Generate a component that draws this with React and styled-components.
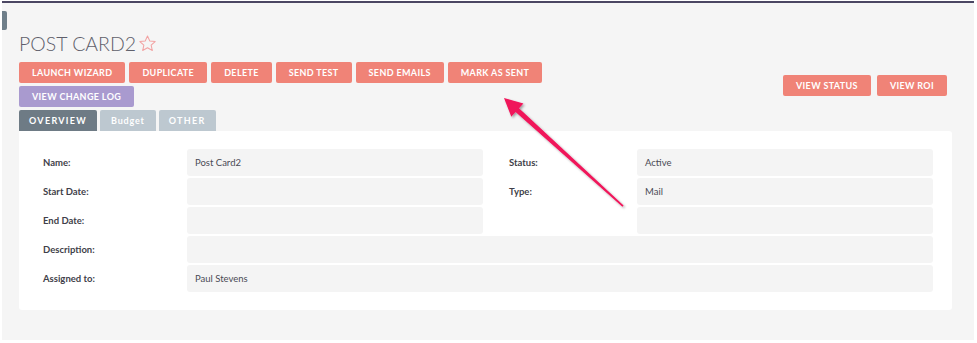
import React from "react";
import styled, { createGlobalStyle } from "styled-components";

const GlobalStyle = createGlobalStyle`
  html, body { margin: 0; padding: 0; background: #ffffff; }
  body { font-family: Lato, "Open Sans", sans-serif; }
`;

// gray page area with the dark top rule
const Frame = styled.div`
  position: relative;
  box-sizing: border-box;
  margin: 1px 0 0 2px;
  width: 972px;
  height: 339px;
  background: #f5f5f5;
  border-top: 2px solid #4b4763;
  padding: 0 20px 0 17px;
`;

const SideHandle = styled.div`
  position: absolute;
  left: 0;
  top: 8px;
  width: 5px;
  height: 19px;
  background: #6f7f8a;
  border-radius: 0 2px 2px 0;
`;

const Title = styled.h1`
  margin: 0;
  padding-top: 29px;
  display: flex;
  align-items: center;
  gap: 2px;
  font-family: Lato, sans-serif;
  font-weight: 300;
  font-size: 19.5px;
  line-height: 24px;
  letter-spacing: 0;
  color: #5f5f6b;
`;

const Star = styled.svg`
  width: 19px;
  height: 19px;
  margin-top: -2px;
`;

const Header = styled.div`
  display: flex;
  justify-content: space-between;
  align-items: center;
  margin-top: 6px;
`;

const ActionRows = styled.div`
  display: flex;
  flex-direction: column;
  gap: 3px;
`;

const Row = styled.div`
  display: flex;
  gap: 4px;
`;

const Button = styled.button`
  box-sizing: border-box;
  height: 21px;
  padding: 0 13px;
  border: none;
  border-radius: 2px;
  background: ${(p) => (p.$variant === "purple" ? "#a99acf" : "#f08377")};
  color: #ffffff;
  font-family: Lato, sans-serif;
  font-weight: 700;
  font-size: 9px;
  letter-spacing: 0.35px;
  line-height: 21px;
  white-space: nowrap;
  cursor: pointer;
`;

const RightActions = styled(Row)`
  gap: 6px;
  margin-right: 7px;
  margin-top: 1px;
`;

const Tabs = styled.div`
  display: flex;
  gap: 3px;
  margin-top: 3px;
`;

const Tab = styled.div`
  box-sizing: border-box;
  height: 21px;
  padding: 0 ${(p) => p.$pad || 10}px;
  border-radius: 2px 2px 0 0;
  background: ${(p) => (p.$active ? "#6e7b85" : "#bdc8d0")};
  color: #ffffff;
  font-family: Lato, sans-serif;
  font-weight: 700;
  font-size: 9px;
  letter-spacing: ${(p) => (p.$caps ? "1.3px" : "0.8px")};
  line-height: 22px;
`;

const Panel = styled.div`
  box-sizing: border-box;
  width: 933px;
  background: #ffffff;
  border-radius: 0 3px 3px 3px;
  padding: 18px 19px 18px 24px;
`;

const Grid = styled.div`
  display: grid;
  grid-template-columns: 144px 296px 26px 128px 296px;
  grid-auto-rows: 27px;
  row-gap: 2px;
`;

const Label = styled.div`
  display: flex;
  align-items: center;
  padding-bottom: 1px;
  font-family: Lato, sans-serif;
  font-weight: 700;
  font-size: 9.5px;
  color: #3f3f4a;
  grid-column: ${(p) => p.$col || "auto"};
`;

const Value = styled.div`
  display: flex;
  align-items: center;
  padding: 0 8px;
  border-radius: 3px;
  background: #f4f4f4;
  font-family: Lato, sans-serif;
  font-size: 9.5px;
  color: #4a4a55;
  grid-column: ${(p) => p.$col || "auto"};
`;

const Spacer = styled.div`
  grid-column: ${(p) => p.$col};
`;

const Annotation = styled.svg`
  position: absolute;
  left: -2px;
  top: -3px;
  width: 977px;
  height: 343px;
  pointer-events: none;
  overflow: visible;
`;

export default function App() {
  return (
    <>
      <GlobalStyle />
      <Frame>
        <SideHandle />
        <Title>
          POST CARD2
          <Star viewBox="0 0 24 24">
            <path
              d="M12 2.5l2.9 6.3 6.8.7-5.1 4.6 1.5 6.8L12 17.4l-6.1 3.5 1.5-6.8-5.1-4.6 6.8-.7z"
              fill="none"
              stroke="#f2a3a3"
              strokeWidth="1.3"
              strokeLinejoin="round"
            />
          </Star>
        </Title>

        <Header>
          <ActionRows>
            <Row>
              <Button>LAUNCH WIZARD</Button>
              <Button>DUPLICATE</Button>
              <Button>DELETE</Button>
              <Button>SEND TEST</Button>
              <Button>SEND EMAILS</Button>
              <Button>MARK AS SENT</Button>
            </Row>
            <Row>
              <Button $variant="purple">VIEW CHANGE LOG</Button>
            </Row>
          </ActionRows>
          <RightActions>
            <Button>VIEW STATUS</Button>
            <Button>VIEW ROI</Button>
          </RightActions>
        </Header>

        <Tabs>
          <Tab $active $caps>OVERVIEW</Tab>
          <Tab $pad={11}>Budget</Tab>
          <Tab $caps>OTHER</Tab>
        </Tabs>

        <Panel>
          <Grid>
            <Label>Name:</Label>
            <Value>Post Card2</Value>
            <Label $col="4">Status:</Label>
            <Value>Active</Value>

            <Label>Start Date:</Label>
            <Value />
            <Label $col="4">Type:</Label>
            <Value>Mail</Value>

            <Label>End Date:</Label>
            <Value />
            <Spacer $col="3 / 5" />
            <Value />

            <Label>Description:</Label>
            <Value $col="2 / 6" />

            <Label>Assigned to:</Label>
            <Value $col="2 / 6">Paul Stevens</Value>
          </Grid>
        </Panel>

        <Annotation viewBox="0 0 977 343">
          <defs>
            <filter id="shadow" x="-20%" y="-20%" width="140%" height="140%">
              <feDropShadow dx="1.5" dy="1.5" stdDeviation="1" floodColor="#000" floodOpacity="0.35" />
            </filter>
          </defs>
          <polygon
            points="504,98 523.4,103.4 519,108.2 623.6,205.4 622.4,206.7 515.6,112 511.3,116.8"
            fill="#f0145a"
            filter="url(#shadow)"
          />
        </Annotation>
      </Frame>
    </>
  );
}
